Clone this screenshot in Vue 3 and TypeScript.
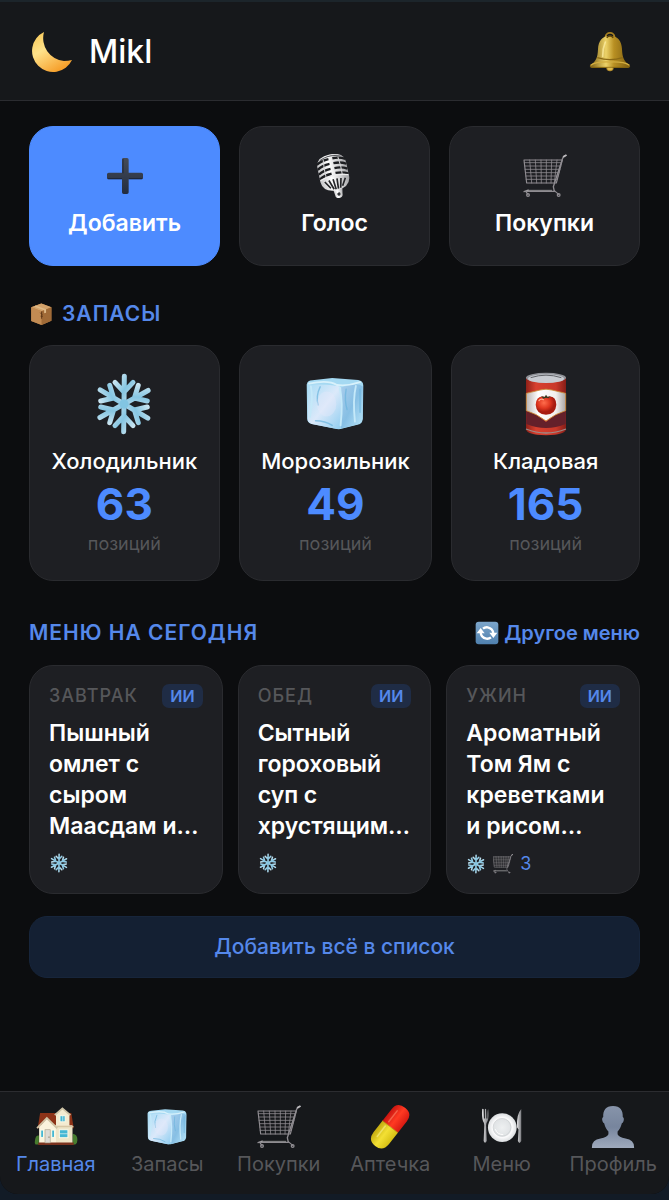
<script setup lang="ts">
interface QuickAction { icon: string; label: string; primary?: boolean }
interface Storage { icon: string; name: string; count: number }
interface Meal { slot: string; title: string; toBuy?: number }
interface Tab { icon: string; label: string; href: string; active?: boolean }

const actions: QuickAction[] = [
  { icon: 'plus', label: 'Добавить', primary: true },
  { icon: 'mic', label: 'Голос' },
  { icon: 'cart', label: 'Покупки' },
]

const storages: Storage[] = [
  { icon: 'snow', name: 'Холодильник', count: 63 },
  { icon: 'ice', name: 'Морозильник', count: 49 },
  { icon: 'can', name: 'Кладовая', count: 165 },
]

const meals: Meal[] = [
  { slot: 'Завтрак', title: 'Пышный омлет с сыром Маасдам и…' },
  { slot: 'Обед', title: 'Сытный гороховый суп с хрустящим…' },
  { slot: 'Ужин', title: 'Ароматный Том Ям с креветками и рисом…', toBuy: 3 },
]

const tabs: Tab[] = [
  { icon: 'house', label: 'Главная', href: '#home', active: true },
  { icon: 'ice', label: 'Запасы', href: '#stock' },
  { icon: 'cart', label: 'Покупки', href: '#shopping' },
  { icon: 'pill', label: 'Аптечка', href: '#medicine' },
  { icon: 'plate', label: 'Меню', href: '#menu' },
  { icon: 'person', label: 'Профиль', href: '#profile' },
]

const basketRows = [26, 36, 46, 56, 66, 76]
const armAngles = [0, 60, 120, 180, 240, 300]
const micBands = [20, 35, 50, 65]
</script>

<template>
  <div class="page">
    <svg class="sprite" aria-hidden="true">
      <defs>
        <linearGradient id="g-moon" x1="0" y1="0" x2="0.6" y2="1">
          <stop offset="0" stop-color="#f6c552" /><stop offset="0.45" stop-color="#fee28a" /><stop offset="1" stop-color="#f6a02c" />
        </linearGradient>
        <linearGradient id="g-bell" x1="0" x2="1">
          <stop offset="0" stop-color="#7d5f12" /><stop offset="0.4" stop-color="#ecd268" /><stop offset="0.6" stop-color="#b88f22" /><stop offset="1" stop-color="#7b5c10" />
        </linearGradient>
        <linearGradient id="g-plus" x1="0" y1="0" x2="0" y2="1">
          <stop offset="0" stop-color="#454b57" /><stop offset="1" stop-color="#222c40" />
        </linearGradient>
        <linearGradient id="g-mic" x1="0" x2="1">
          <stop offset="0" stop-color="#c4c4c6" /><stop offset="0.4" stop-color="#ffffff" /><stop offset="1" stop-color="#a3a3a6" />
        </linearGradient>
        <linearGradient id="g-snow" x1="0" y1="0" x2="1" y2="1">
          <stop offset="0" stop-color="#d3e9f3" /><stop offset="0.5" stop-color="#86c6e2" /><stop offset="1" stop-color="#cfe5f1" />
        </linearGradient>
        <linearGradient id="g-ice-l" x1="0" y1="0" x2="1" y2="1">
          <stop offset="0" stop-color="#a9dcf5" /><stop offset="0.5" stop-color="#dbe9fa" /><stop offset="1" stop-color="#8fcdf0" />
        </linearGradient>
        <linearGradient id="g-ice-r" x1="0" y1="0" x2="1" y2="1">
          <stop offset="0" stop-color="#a9cdec" /><stop offset="0.5" stop-color="#87bfe4" /><stop offset="1" stop-color="#b9e6fa" />
        </linearGradient>
        <linearGradient id="g-can" x1="0" x2="1">
          <stop offset="0" stop-color="#8f2018" /><stop offset="0.25" stop-color="#d8402f" /><stop offset="0.75" stop-color="#c9382a" /><stop offset="1" stop-color="#861d17" />
        </linearGradient>
        <linearGradient id="g-label" x1="0" x2="1">
          <stop offset="0" stop-color="#b9b3b1" /><stop offset="0.3" stop-color="#ffffff" /><stop offset="0.75" stop-color="#f2efed" /><stop offset="1" stop-color="#aaa5a4" />
        </linearGradient>
        <radialGradient id="g-tomato" cx="0.4" cy="0.35">
          <stop offset="0" stop-color="#ff6d4c" /><stop offset="0.6" stop-color="#e03720" /><stop offset="1" stop-color="#a81c10" />
        </radialGradient>
        <linearGradient id="g-refresh" x1="0" y1="0" x2="0" y2="1">
          <stop offset="0" stop-color="#7da6cb" /><stop offset="1" stop-color="#4f80ae" />
        </linearGradient>
        <linearGradient id="g-pill-r" x1="0" x2="1">
          <stop offset="0" stop-color="#c91410" /><stop offset="0.5" stop-color="#ff3a22" /><stop offset="1" stop-color="#d81a12" />
        </linearGradient>
        <linearGradient id="g-pill-y" x1="0" x2="1">
          <stop offset="0" stop-color="#c4ab10" /><stop offset="0.5" stop-color="#f3e034" /><stop offset="1" stop-color="#d6bf14" />
        </linearGradient>
        <linearGradient id="g-steel" x1="0" x2="1">
          <stop offset="0" stop-color="#e2e2e4" /><stop offset="1" stop-color="#77787c" />
        </linearGradient>
        <radialGradient id="g-plate">
          <stop offset="0" stop-color="#eef0f1" /><stop offset="0.6" stop-color="#e0e3e5" /><stop offset="0.68" stop-color="#fbfbfc" /><stop offset="1" stop-color="#dadddf" />
        </radialGradient>
        <linearGradient id="g-person" x1="0" y1="0" x2="0" y2="1">
          <stop offset="0" stop-color="#8794aa" /><stop offset="0.5" stop-color="#77859d" /><stop offset="1" stop-color="#9faabd" />
        </linearGradient>
      </defs>

      <symbol id="i-moon" viewBox="0 0 44 44">
        <path d="M14 2A21 21 0 1 0 42 30Q38 31 34 31A23 23 0 0 1 14 2Z" fill="url(#g-moon)" />
      </symbol>

      <symbol id="i-bell" viewBox="0 0 132 132">
        <g transform="translate(0 4) scale(1 .94)">
          <circle cx="66" cy="18" r="13" fill="none" stroke="#a37e22" stroke-width="6" />
          <circle cx="66" cy="116" r="11" fill="#b38c2c" />
          <path d="M66 14C42 14 31 32 30 56C29 84 24 96 6 108Q4 116 12 116H120Q128 116 126 108C108 96 103 84 102 56C101 32 90 14 66 14Z" fill="url(#g-bell)" />
          <path d="M8 108Q26 96 66 98Q106 96 124 108" fill="none" stroke="#d2ad40" stroke-width="4" />
          <path d="M28 84Q66 96 104 84" fill="none" stroke="#8a6915" stroke-width="4" />
          <path d="M52 34Q44 54 44 80" fill="none" stroke="#fff0a6" stroke-width="5" stroke-linecap="round" opacity=".7" />
          <path d="M10 115H122" stroke="#86660f" stroke-width="3" />
          <path d="M56 20Q66 10 76 20" fill="none" stroke="#5f4509" stroke-width="5" />
          <path d="M58 116a8 8 0 0 0 16 0Z" fill="#dfbb4e" />
        </g>
      </symbol>

      <symbol id="i-plus" viewBox="0 0 132 132">
        <path d="M60 12h12q5 0 5 5V56H115q5 0 5 5V71q0 5-5 5H77V115q0 5-5 5H62q-5 0-5-5V76H17q-5 0-5-5V61q0-5 5-5H57V17q0-5 3-5Z" fill="url(#g-plus)" />
        <path d="M60 15V58M14 74H57M78 74H118" stroke="#121c31" stroke-width="3" opacity=".7" />
      </symbol>

      <symbol id="i-mic" viewBox="0 0 132 132">
        <g transform="rotate(-12 62 60)">
          <path d="M50 100H80L76 122Q76 134 64 134Q52 134 53 122Z" fill="url(#g-mic)" />
          <circle cx="65" cy="122" r="5" fill="#35363a" />
          <path d="M18 34Q18 0 62 0Q106 0 106 34V76Q104 108 62 110Q20 108 18 76Z" fill="url(#g-mic)" />
          <path v-for="y in micBands" :key="y" :d="`M18 ${y + 3}Q34 ${y - 7} 56 ${y - 7}M68 ${y - 7}Q90 ${y - 7} 106 ${y + 3}`" fill="none" stroke="#1d1e21" stroke-width="7" />
          <path d="M30 12Q62 -2 94 12" fill="none" stroke="#57585c" stroke-width="3" />
          <path d="M40 12Q36 40 38 68M85 12Q89 40 87 68" fill="none" stroke="#d4d4d6" stroke-width="3" />
          <path d="M31 78L45 100M44 76L54 105M57 75L60 106M69 75L67 106M81 76L74 105M94 78L81 100" stroke="#242528" stroke-width="5" />
          <path d="M19 71Q62 57 105 71" fill="none" stroke="#ececed" stroke-width="4" />
        </g>
      </symbol>

      <symbol id="i-cart" viewBox="0 0 132 132">
        <g fill="none" stroke="#8f8c91" stroke-linecap="round" stroke-linejoin="round">
          <path d="M3 18H118L100 87H11Z" stroke-width="3.5" />
          <path v-for="y in basketRows" :key="y" :d="`M${3 + (y - 18) / 9} ${y}H${118 - (y - 18) / 4}`" stroke-width="2.4" />
          <path d="M20 18L26 87M37 18L41 87M54 18L55 87M70 18V87M86 18L84 87M102 18L94 87" stroke-width="2.4" />
          <path d="M129 4Q122 4 119 13L91 98L94 112H6" stroke-width="4" />
          <path d="M94 110L107 121M3 113L16 108M8 112L15 121" stroke-width="3.5" />
          <path d="M122 8L129 4" stroke="#bcbabd" stroke-width="5" />
          <circle cx="15" cy="123" r="4" stroke-width="4" />
          <circle cx="107" cy="123" r="4" stroke-width="4" />
          <path d="M12 109H86" stroke="#bdbbbd" stroke-width="2" />
        </g>
      </symbol>

      <symbol id="i-snow" viewBox="0 0 192 192">
        <g fill="none" stroke="url(#g-snow)" stroke-width="15" stroke-linecap="round" stroke-linejoin="round">
          <path v-for="a in armAngles" :key="a" d="M96 96L97 13M96 60L69 31M96 60L123 31" :transform="`rotate(${a} 96 96)`" />
        </g>
        <circle cx="96" cy="96" r="14" fill="#82c5e2" />
      </symbol>

      <symbol id="i-ice" viewBox="-3 -3 138 138">
        <path d="M5 24Q7 15 17 15L60 10L116 14Q127 16 127 26L126 99Q124 110 114 111L78 120Q72 121 66 119L16 109Q6 106 6 97Z" fill="#a5d9f2" />
        <path d="M7 25Q30 22 72 27Q81 28 80 38L78 118Q74 121 64 119L16 109Q7 106 7 98Z" fill="url(#g-ice-l)" />
        <path d="M80 30L105 24Q118 22 126 28L125 98Q123 108 114 110L79 119Z" fill="url(#g-ice-r)" />
        <path d="M10 22Q52 13 70 25Q94 28 120 19" fill="none" stroke="#d8f1fb" stroke-width="4" stroke-linecap="round" />
        <path d="M14 28Q19 54 12 94M76 32Q84 60 78 112M111 27Q104 57 109 104" fill="none" stroke="#c5e9f9" stroke-width="4" stroke-linecap="round" />
        <path d="M34 29Q24 49 30 68M90 34Q86 58 92 78M120 34V84M24 102Q45 102 60 112" fill="none" stroke="#69b4dd" stroke-width="3" stroke-linecap="round" opacity=".7" />
        <ellipse cx="48" cy="66" rx="21" ry="27" fill="#e7e9fb" opacity=".4" />
      </symbol>

      <symbol id="i-can" viewBox="0 0 192 192">
        <path d="M36 16V172Q38 189 96 190Q154 189 156 172V16Z" fill="url(#g-can)" />
        <path d="M37 116Q66 124 96 150Q126 124 155 116V156Q126 168 96 168Q66 168 37 156Z" fill="#64202a" />
        <path d="M37 64Q62 58 78 54Q96 49 114 54Q130 58 155 64V116Q126 124 96 147Q66 124 37 116Z" fill="url(#g-label)" stroke="#c98a35" stroke-width="2.5" />
        <path d="M36 171Q96 195 156 171" fill="none" stroke="#9d8b87" stroke-width="4" />
        <ellipse cx="96" cy="17" rx="60" ry="15" fill="#8f9197" />
        <ellipse cx="96" cy="20" rx="54" ry="13" fill="#c8cbd1" />
        <path d="M50 17Q96 2 142 17" fill="none" stroke="#626469" stroke-width="3" />
        <path d="M96 75Q126 67 127 98Q125 127 96 128Q67 127 65 98Q67 68 96 75Z" fill="url(#g-tomato)" />
        <path d="M81 72L92 75L96 68L101 75L111 72L103 79L96 77L88 80Z" fill="#353c22" />
        <path d="M75 86Q80 79 88 83" fill="none" stroke="#ffad91" stroke-width="4" stroke-linecap="round" />
      </symbol>

      <symbol id="i-box" viewBox="-3 -3 76 76">
        <path d="M36 2L68 14V56L37 70L4 57V14Z" fill="#b67e45" />
        <path d="M36 2L68 14L37 26L4 14Z" fill="#d3a26b" />
        <path d="M4 14L37 26V70L4 57Z" fill="#c28b53" />
        <path d="M37 26L68 14V56L37 70Z" fill="#a06a37" />
        <path d="M18 8L51 20V31L45 33V23L13 11Z" fill="#dfba88" />
        <path d="M37 27V50M33 31L39 37M34 42H41" stroke="#5c3617" stroke-width="3" />
      </symbol>

      <symbol id="i-refresh" viewBox="0 0 72 72">
        <rect x="2" y="2" width="68" height="68" rx="9" fill="url(#g-refresh)" />
        <path d="M17 34Q18 50 34 53Q42 54 48 49M55 38Q54 22 38 19Q30 18 24 23" fill="none" stroke="#fff" stroke-width="7" />
        <path d="M5 37L17 21L29 37ZM43 35L55 51L67 35Z" fill="#fff" />
      </symbol>

      <symbol id="i-house" viewBox="0 0 144 132">
        <path d="M3 111Q5 92 16 94V123H5Q1 119 3 111ZM127 88Q143 91 142 109Q142 120 135 123H126Z" fill="#477c2e" />
        <path d="M20 20H122L130 70H12Z" fill="#8d3318" />
        <path d="M18 60H126V121H18Z" fill="#eee5c8" />
        <path d="M72 23L93 5L116 24V62H72Z" fill="#f3ebd0" />
        <path d="M68 27L93 5L119 27" fill="none" stroke="#cfc5a8" stroke-width="6" />
        <path d="M17 67L42 38L72 68V121H17Z" fill="#faf3dc" />
        <path d="M10 70L42 37L76 70" fill="none" stroke="#d0c4a6" stroke-width="6" />
        <path d="M74 65H129" stroke="#d7c8a5" stroke-width="4" />
        <path d="M14 117H130V125H14Z" fill="#7a321e" />
        <g fill="#45b7d4" stroke="#fffbe9" stroke-width="3">
          <rect x="85" y="29" width="17" height="20" />
          <rect x="83" y="75" width="28" height="26" />
          <rect x="22" y="76" width="9" height="24" />
          <rect x="58" y="76" width="9" height="24" />
        </g>
        <path d="M84 88H110M94 30V48" stroke="#f5fbf5" stroke-width="2" />
        <rect x="36" y="75" width="17" height="43" fill="#dedbd4" stroke="#a69d87" stroke-width="2" />
        <circle cx="49" cy="99" r="2" fill="#695d48" />
      </symbol>

      <symbol id="i-pill" viewBox="0 0 144 144">
        <g transform="rotate(38 72 72)">
          <path d="M40 72V24Q40 -8 72 -8Q104 -8 104 24V72Z" fill="url(#g-pill-r)" />
          <path d="M40 70V119Q41 151 72 151Q103 151 104 119V70Z" fill="url(#g-pill-y)" />
          <path d="M40 71H104" stroke="#953d12" stroke-width="2" opacity=".6" />
          <path d="M58 16V61" stroke="#ff9978" stroke-width="5" stroke-linecap="round" opacity=".5" />
          <path d="M58 79V122" stroke="#fff8a5" stroke-width="5" stroke-linecap="round" opacity=".5" />
        </g>
      </symbol>

      <symbol id="i-plate" viewBox="0 0 144 132">
        <path d="M7 8Q5 34 10 47Q14 52 14 60L12 112Q16 123 22 112L20 60Q20 52 25 46Q30 34 27 8Q24 8 24 38H21L20 8Q17 4 16 8V38H13L12 8Q9 4 7 8Z" fill="url(#g-steel)" />
        <circle cx="73" cy="68" r="47" fill="url(#g-plate)" />
        <circle cx="72" cy="67" r="29" fill="none" stroke="#c8ccce" stroke-width="2" />
        <path d="M50 73Q57 91 76 91" fill="none" stroke="#fff" stroke-width="3" />
        <path d="M135 7Q119 24 121 67L126 74L124 112Q129 124 135 112Z" fill="url(#g-steel)" />
      </symbol>

      <symbol id="i-person" viewBox="0 0 144 144">
        <path d="M72 3C48 3 39 18 40 39Q34 43 38 54Q40 59 43 60Q48 79 57 87V96Q54 105 31 110Q3 114 3 138V141H141V138Q141 114 113 110Q90 105 87 96V87Q96 79 101 60Q104 59 106 54Q110 43 104 39C105 18 96 3 72 3Z" fill="url(#g-person)" />
      </symbol>
    </svg>

    <div class="shell">
      <header class="topbar">
        <div class="brand">
          <svg class="icon icon-tile" aria-hidden="true"><use href="#i-moon" /></svg>
          <h1>Mikl</h1>
        </div>
        <button class="bell" type="button" aria-label="Уведомления">
          <svg class="icon icon-tile" aria-hidden="true"><use href="#i-bell" /></svg>
        </button>
      </header>

      <main>
        <div class="actions">
          <button v-for="a in actions" :key="a.label" type="button" class="card action" :class="{ primary: a.primary }">
            <svg class="icon icon-tile" aria-hidden="true"><use :href="`#i-${a.icon}`" /></svg>
            <span>{{ a.label }}</span>
          </button>
        </div>

        <section class="stock">
          <h2>
            <svg class="icon icon-inline" aria-hidden="true"><use href="#i-box" /></svg>
            Запасы
          </h2>
          <div class="storages">
            <button v-for="s in storages" :key="s.name" type="button" class="card storage">
              <svg class="icon icon-storage" aria-hidden="true"><use :href="`#i-${s.icon}`" /></svg>
              <span class="name">{{ s.name }}</span>
              <span class="count">{{ s.count }}</span>
              <span class="unit">позиций</span>
            </button>
          </div>
        </section>

        <section class="menu">
          <div class="menu-head">
            <h2>Меню на сегодня</h2>
            <button type="button" class="other">
              <svg class="icon icon-inline" aria-hidden="true"><use href="#i-refresh" /></svg>
              Другое меню
            </button>
          </div>
          <div class="meals">
            <article v-for="m in meals" :key="m.slot" class="card meal">
              <div class="meal-head">
                <span class="slot">{{ m.slot }}</span>
                <span class="badge">ИИ</span>
              </div>
              <h3>{{ m.title }}</h3>
              <div class="meal-foot">
                <svg class="icon icon-small" aria-hidden="true"><use href="#i-snow" /></svg>
                <template v-if="m.toBuy">
                  <svg class="icon icon-small" aria-hidden="true"><use href="#i-cart" /></svg>
                  <span>{{ m.toBuy }}</span>
                </template>
              </div>
            </article>
          </div>
          <button type="button" class="add-all">Добавить всё в список</button>
        </section>
      </main>

      <nav class="tabs">
        <a v-for="t in tabs" :key="t.label" :href="t.href" :class="{ active: t.active }">
          <svg class="icon icon-tile" aria-hidden="true"><use :href="`#i-${t.icon}`" /></svg>
          <span>{{ t.label }}</span>
        </a>
      </nav>
    </div>
  </div>
</template>

<style>
body {
  margin: 0;
  background: #121b26;
}
</style>

<style scoped>
.page {
  box-sizing: border-box;
  min-height: 100vh;
  display: flex;
  flex-direction: column;
  padding-bottom: 6px;
  border-top: 2px solid #1c252b;
  background: #121b26;
  color: #fff;
  font-family: Inter, "Noto Sans", sans-serif;
}
.page * {
  box-sizing: border-box;
}
.sprite {
  position: absolute;
  width: 0;
  height: 0;
}
.shell {
  flex: 1;
  display: flex;
  flex-direction: column;
  overflow: hidden;
  border-radius: 0 0 18px 18px;
  background: #0c0d0f;
}
button {
  margin: 0;
  padding: 0;
  border: 0;
  background: none;
  color: inherit;
  font: inherit;
  cursor: pointer;
}
h1,
h2,
h3 {
  margin: 0;
}
.icon {
  display: block;
  flex: none;
}
.icon-tile { width: 44px; height: 44px; }
.icon-storage { width: 64px; height: 64px; }
.icon-inline { width: 24px; height: 24px; }
.icon-small { width: 20px; height: 20px; }

.topbar {
  display: flex;
  align-items: center;
  justify-content: space-between;
  height: 99px;
  padding: 2px 37px 0 30px;
  border-bottom: 1px solid #2b2c30;
  background: #16181b;
}
.brand {
  display: flex;
  align-items: center;
  gap: 15px;
}
h1 {
  font-size: 32px;
  line-height: 40px;
  font-weight: 500;
}
main {
  flex: 1;
  padding: 25px 29px 24px;
}
.card {
  border: 1px solid #2a2b2f;
  border-radius: 24px;
  background: #1e1f23;
}
.actions {
  display: grid;
  grid-template-columns: repeat(3, 1fr);
  gap: 19px;
}
.action {
  display: flex;
  flex-direction: column;
  align-items: center;
  justify-content: center;
  gap: 10px;
  height: 140px;
  font-size: 23px;
  line-height: 30px;
  font-weight: 600;
}
.action.primary {
  border-color: #4d8bff;
  background: #4d8bff;
}
.stock {
  margin-top: 35px;
}
h2 {
  display: flex;
  align-items: center;
  gap: 9px;
  color: #5588ea;
  font-size: 21px;
  line-height: 26px;
  font-weight: 600;
  letter-spacing: 1px;
  text-transform: uppercase;
}
.storages {
  display: grid;
  grid-template-columns: 191fr 194fr 189fr;
  gap: 19px;
  margin-top: 18px;
}
.storage {
  display: flex;
  flex-direction: column;
  align-items: center;
  height: 236px;
  padding-top: 26px;
}
.storage .name {
  margin-top: 11px;
  font-size: 22px;
  line-height: 28px;
  font-weight: 500;
}
.storage .count {
  margin-top: 5px;
  color: #4d8bff;
  font-size: 44px;
  line-height: 48px;
  font-weight: 700;
}
.storage .unit {
  margin-top: 4px;
  color: #56575a;
  font-size: 18px;
  line-height: 24px;
}
.menu {
  margin-top: 38px;
}
.menu-head {
  display: flex;
  align-items: center;
  justify-content: space-between;
}
.other {
  display: flex;
  align-items: center;
  gap: 5px;
  color: #5588ea;
  font-size: 20px;
  line-height: 28px;
  font-weight: 600;
}
.meals {
  display: grid;
  grid-template-columns: repeat(3, 1fr);
  gap: 15px;
  margin-top: 18px;
}
.meal {
  min-width: 0;
  padding: 18px 19px;
}
.meal-head {
  display: flex;
  align-items: center;
  justify-content: space-between;
}
.slot {
  color: #56575a;
  font-size: 18px;
  line-height: 24px;
  font-weight: 500;
  letter-spacing: 1px;
  text-transform: uppercase;
}
.badge {
  padding: 0 8px;
  border-radius: 7px;
  background: #1f2c45;
  color: #5588ea;
  font-size: 16px;
  line-height: 24px;
  font-weight: 600;
}
h3 {
  margin-top: 10px;
  font-size: 23px;
  line-height: 31px;
  font-weight: 600;
}
.meal-foot {
  display: flex;
  align-items: center;
  gap: 7px;
  margin-top: 11px;
  color: #5588ea;
  font-size: 18px;
  line-height: 22px;
}
.add-all {
  display: block;
  width: 100%;
  margin-top: 22px;
  border: 1px solid #17253b;
  border-radius: 18px;
  background: #142033;
  color: #5588ea;
  font-size: 21px;
  line-height: 60px;
  font-weight: 500;
}
.tabs {
  display: grid;
  grid-template-columns: repeat(6, 1fr);
  height: 103px;
  padding-top: 13px;
  border-top: 1px solid #2b2c30;
  background: #16181b;
}
.tabs a {
  display: flex;
  flex-direction: column;
  align-items: center;
  gap: 2px;
  color: #56575a;
  font-size: 20px;
  line-height: 26px;
  text-decoration: none;
}
.tabs a.active {
  color: #5588ea;
}
</style>
